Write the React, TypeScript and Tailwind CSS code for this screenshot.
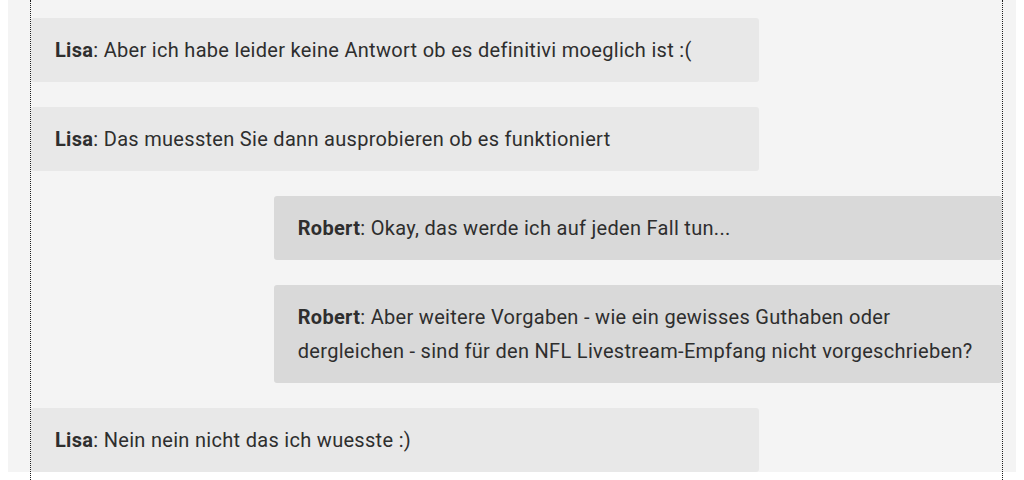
const messages = [
  { from: "Lisa", text: "Aber ich habe leider keine Antwort ob es definitivi moeglich ist :(" },
  { from: "Lisa", text: "Das muessten Sie dann ausprobieren ob es funktioniert" },
  { from: "Robert", text: "Okay, das werde ich auf jeden Fall tun..." },
  {
    from: "Robert",
    text: "Aber weitere Vorgaben - wie ein gewisses Guthaben oder dergleichen - sind für den NFL Livestream-Empfang nicht vorgeschrieben?",
  },
  { from: "Lisa", text: "Nein nein nicht das ich wuesste :)" },
]

function Bubble({ from, text }: { from: string; text: string }) {
  const own = from === "Robert"
  return (
    <div className={own ? "flex justify-end" : "flex justify-start"}>
      <div
        className={
          own
            ? "w-[75%] rounded-[3px] bg-[#d9d9d9] px-[24px] py-[15px] text-[20px] leading-[34px] tracking-[0.3px] text-[#2e2e2e]"
            : "w-[75%] rounded-[3px] bg-[#e8e8e8] px-[24px] py-[15px] text-[20px] leading-[34px] tracking-[0.3px] text-[#2e2e2e]"
        }
      >
        <span className="font-bold">{from}</span>: {text}
      </div>
    </div>
  )
}

export default function App() {
  return (
    <div className="h-[480px] overflow-hidden bg-white" style={{ fontFamily: "Roboto, 'Liberation Sans', sans-serif" }}>
      <div className="mx-[8px] mt-[5px] h-[472px] bg-[#f4f4f4] pl-[22px] pr-[13px]">
        <div className="-mt-[5px] flex h-[480px] flex-col gap-[25px] border-x border-dotted border-[#1f1f1f] pt-[18px]">
          {messages.map((m, i) => (
            <Bubble key={i} from={m.from} text={m.text} />
          ))}
        </div>
      </div>
    </div>
  )
}
